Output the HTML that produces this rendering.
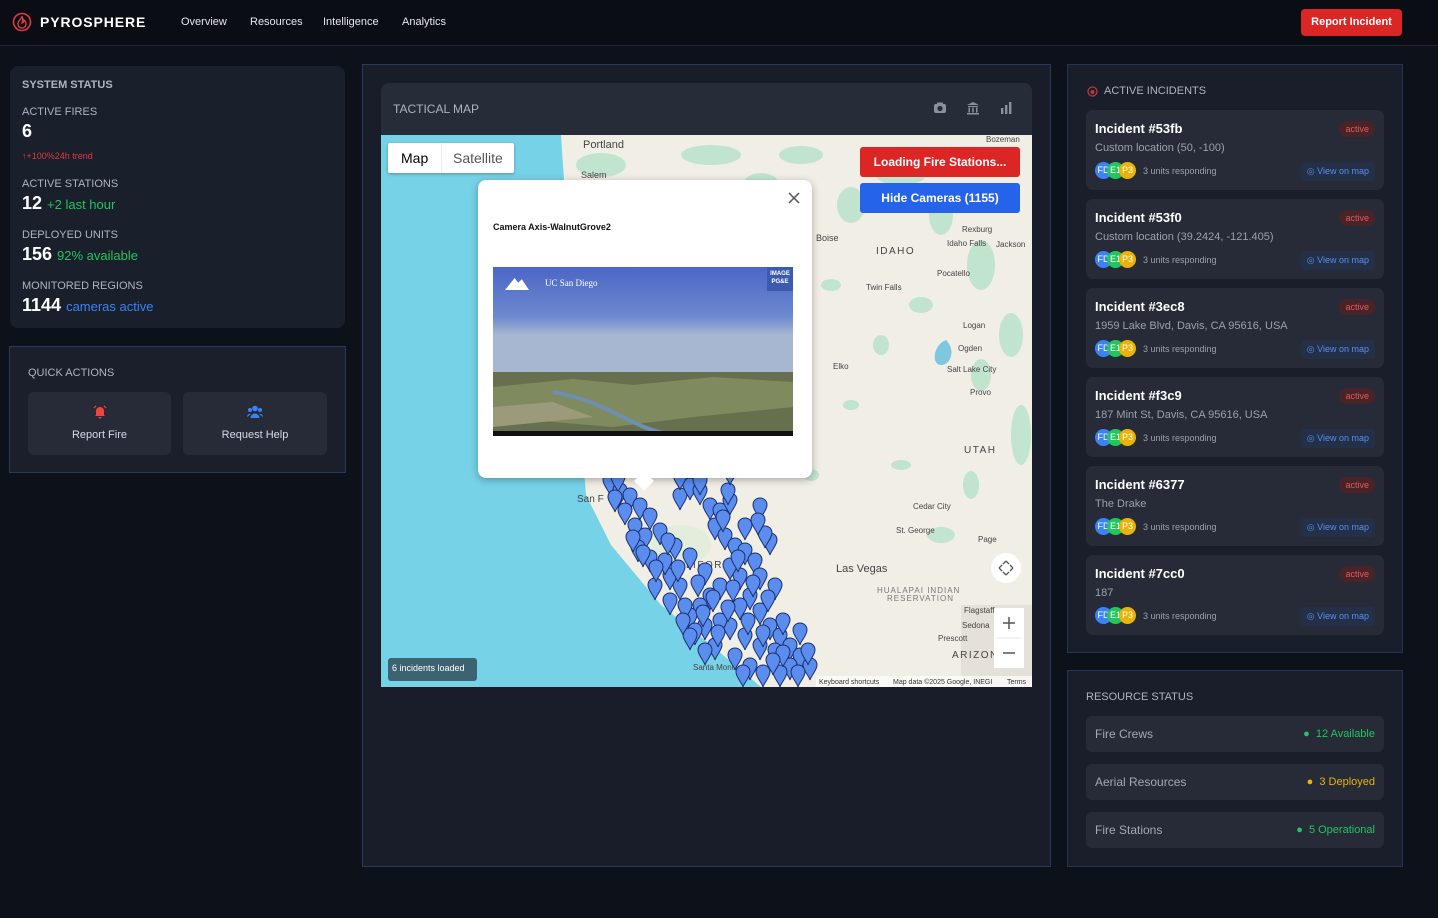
<!DOCTYPE html>
<html><head><meta charset="utf-8">
<style>
*{box-sizing:border-box;margin:0;padding:0}
body{width:1438px;height:918px;background:#0d1119;font-family:"Liberation Sans",sans-serif;position:relative;overflow:hidden;color:#e5e7eb}
.abs{position:absolute}
.hdr{left:0;top:0;width:1438px;height:46px;background:#0a0d14;border-bottom:1px solid #1f2735}
.nav{top:16px;font-size:11px;color:#e5e7eb}
.panel{background:#1a1f2c;border-radius:8px}
.lbl{font-size:11px;color:#aeb4c0;text-transform:uppercase}
.big{font-size:18px;font-weight:bold;color:#fff}
.card{left:1086px;width:298px;height:80px;background:#262b37;border-radius:7px}
.card .t{position:absolute;left:9px;top:11px;font-size:13px;font-weight:bold;color:#fff}
.card .a{position:absolute;right:9px;top:11px;background:#4a2328;color:#e05a5a;font-size:9px;padding:3px 6px;border-radius:9px}
.card .l{position:absolute;left:9px;top:32px;font-size:11px;color:#9aa1ad}
.card .u{position:absolute;left:9px;top:52px;height:17px;width:60px}
.card .u span{position:absolute;top:0;width:17px;height:17px;border-radius:50%;font-size:9px;color:#fff;text-align:center;line-height:17px}
.card .r{position:absolute;left:57px;top:56px;font-size:9px;color:#9aa1ad}
.card .v{position:absolute;right:9px;top:52px;background:#233047;color:#5b8def;font-size:9px;padding:4px 6px;border-radius:3px}
.res{left:1086px;width:298px;height:36px;background:#262b37;border-radius:6px}
.res .n{position:absolute;left:9px;top:11px;font-size:12px;color:#a3a9b5}
.res .s{position:absolute;right:9px;top:12px;font-size:11px}
</style></head><body>
<div class="abs hdr"></div>
<svg class="abs" style="left:12px;top:12px" width="20" height="20" viewBox="0 0 20 20"><circle cx="10" cy="10" r="8.5" fill="none" stroke="#e0393e" stroke-width="1.6"/><path d="M10 4c0 3-4 4-4 8a4 4 0 008 0c0-2-1-3-2-4 0 2-1 3-2 3 1-2 1-4 0-7z" fill="none" stroke="#e0393e" stroke-width="1.4"/></svg>
<div class="abs" style="left:40px;top:14px;font-size:14px;font-weight:bold;letter-spacing:0.9px;color:#fff">PYROSPHERE</div>
<div class="abs nav" style="left:181px">Overview</div>
<div class="abs nav" style="left:250px">Resources</div>
<div class="abs nav" style="left:323px">Intelligence</div>
<div class="abs nav" style="left:402px">Analytics</div>
<div class="abs" style="left:1301px;top:9px;width:101px;height:27px;background:#dc2626;border-radius:4px;color:#fff;font-size:11px;font-weight:bold;text-align:center;line-height:27px">Report Incident</div>

<div class="abs panel" style="left:10px;top:66px;width:335px;height:262px"></div>
<div class="abs lbl" style="left:22px;top:79px;font-weight:bold">System Status</div>
<div class="abs lbl" style="left:22px;top:106px">Active Fires</div>
<div class="abs big" style="left:22px;top:121px">6</div>
<div class="abs" style="left:22px;top:151px;font-size:9px;color:#e0393e">↑+100%24h trend</div>
<div class="abs lbl" style="left:22px;top:178px">Active Stations</div>
<div class="abs big" style="left:22px;top:193px">12 <span style="font-size:13px;font-weight:normal;color:#22c55e">+2 last hour</span></div>
<div class="abs lbl" style="left:22px;top:229px">Deployed Units</div>
<div class="abs big" style="left:22px;top:244px">156 <span style="font-size:13px;font-weight:normal;color:#22c55e">92% available</span></div>
<div class="abs lbl" style="left:22px;top:280px">Monitored Regions</div>
<div class="abs big" style="left:22px;top:295px">1144 <span style="font-size:13px;font-weight:normal;color:#3b82f6">cameras active</span></div>

<div class="abs" style="left:9px;top:346px;width:337px;height:127px;background:#1a1f2b;border:1px solid #2b3a5a"></div>
<div class="abs lbl" style="left:28px;top:367px">Quick Actions</div>
<div class="abs" style="left:28px;top:392px;width:143px;height:63px;background:#262b37;border-radius:6px"></div>
<div class="abs" style="left:183px;top:392px;width:144px;height:63px;background:#262b37;border-radius:6px"></div>
<svg class="abs" style="left:93px;top:405px" width="14" height="14" viewBox="0 0 14 14"><path d="M3 10V6a4 4 0 018 0v4l1 1H2z M5.5 12h3a1.5 1.5 0 01-3 0z" fill="#ef4444"/><path d="M1 3l2-2M13 3l-2-2" stroke="#ef4444" stroke-width="1.2"/></svg>
<div class="abs" style="left:28px;top:429px;width:143px;text-align:center;font-size:11px;color:#d8dbe0">Report Fire</div>
<svg class="abs" style="left:247px;top:405px" width="16" height="14" viewBox="0 0 16 14"><circle cx="8" cy="3.5" r="2.8" fill="#3b82f6"/><circle cx="3" cy="5" r="2" fill="#3b82f6"/><circle cx="13" cy="5" r="2" fill="#3b82f6"/><path d="M3.5 13a4.5 4.5 0 019 0z M0 12a3 3 0 014-3 M16 12a3 3 0 00-4-3" fill="#3b82f6"/></svg>
<div class="abs" style="left:183px;top:429px;width:144px;text-align:center;font-size:11px;color:#d8dbe0">Request Help</div>

<div class="abs" style="left:362px;top:64px;width:689px;height:803px;background:#181d29;border:1px solid #2a3a5a"></div>
<div class="abs" style="left:381px;top:83px;width:651px;height:60px;background:#262c38;border-radius:8px 8px 0 0"></div>
<div class="abs" style="left:393px;top:102px;font-size:12px;color:#aeb4c0">TACTICAL MAP</div>
<svg class="abs" style="left:933px;top:101px" width="82" height="14" viewBox="0 0 82 14"><rect x="1" y="3" width="12" height="9" rx="2" fill="#8b919c"/><rect x="4" y="1.5" width="6" height="3" fill="#8b919c"/><circle cx="7" cy="7.5" r="2.6" fill="#262c38"/><path d="M34 4l6-3 6 3z M35 5h10v1h-10z M35.5 6.5h1.5v5h-1.5z M39.2 6.5h1.5v5h-1.5z M43 6.5h1.5v5h-1.5z M34 12h12v1.5h-12z" fill="#8b919c"/><rect x="68" y="7" width="2.4" height="6" fill="#8b919c"/><rect x="72" y="4" width="2.4" height="9" fill="#8b919c"/><rect x="76" y="1" width="2.4" height="12" fill="#8b919c"/></svg>

<!-- map -->
<svg class="abs" style="left:381px;top:135px" width="651" height="552" viewBox="0 0 651 552">
<defs><path id="pn" d="M7 0C3 0 0 3 0 7C0 12 6 18 7 22C8 18 14 12 14 7C14 3 11 0 7 0Z" fill="#5b8def" stroke="#1c2f6e" stroke-width="1"/></defs>
<rect width="651" height="552" fill="#f1eee5"/>
<g fill="#b5e2c9" opacity="0.8">
<ellipse cx="220" cy="30" rx="25" ry="12"/><ellipse cx="270" cy="60" rx="20" ry="14"/><ellipse cx="330" cy="20" rx="30" ry="10"/><ellipse cx="380" cy="50" rx="18" ry="12"/><ellipse cx="420" cy="20" rx="22" ry="9"/><ellipse cx="470" cy="70" rx="14" ry="18"/><ellipse cx="520" cy="40" rx="25" ry="10"/><ellipse cx="560" cy="80" rx="12" ry="20"/><ellipse cx="600" cy="130" rx="14" ry="25"/><ellipse cx="620" cy="60" rx="16" ry="12"/><ellipse cx="630" cy="200" rx="12" ry="22"/><ellipse cx="600" cy="240" rx="10" ry="16"/><ellipse cx="640" cy="300" rx="10" ry="30"/><ellipse cx="540" cy="170" rx="12" ry="8"/><ellipse cx="500" cy="210" rx="8" ry="10"/><ellipse cx="450" cy="150" rx="10" ry="6"/><ellipse cx="300" cy="100" rx="14" ry="8"/><ellipse cx="250" cy="110" rx="10" ry="7"/><ellipse cx="560" cy="400" rx="14" ry="8"/><ellipse cx="430" cy="340" rx="8" ry="6"/><ellipse cx="360" cy="300" rx="10" ry="6"/><ellipse cx="470" cy="270" rx="8" ry="5"/><ellipse cx="320" cy="170" rx="8" ry="10"/><ellipse cx="590" cy="350" rx="8" ry="14"/><ellipse cx="520" cy="330" rx="10" ry="5"/><ellipse cx="300" cy="410" rx="30" ry="20" fill="#dfeed8"/></g>
<path d="M0 0H180L184 60L190 120L197 200L200 300L205 360L230 410L280 470L330 510L380 552H0Z" fill="#76d2e7"/>
<path d="M565 205c10 10 5 25 -5 25s-8-20 5-25z" fill="#7fc7df"/>
<rect x="580" y="470" width="71" height="82" fill="#ddd9d2" opacity="0.6"/>
<g font-family="Liberation Sans,sans-serif" fill="#444" font-size="9">
<text x="202" y="13" font-size="11">Portland</text><text x="200" y="43">Salem</text><text x="605" y="7" font-size="8">Bozeman</text>
<text x="435" y="106">Boise</text><text x="495" y="119" font-size="10" letter-spacing="1.5">IDAHO</text><text x="581" y="97" font-size="8">Rexburg</text><text x="566" y="111" font-size="8">Idaho Falls</text><text x="615" y="112" font-size="8">Jackson</text><text x="556" y="141" font-size="8">Pocatello</text><text x="485" y="155" font-size="8">Twin Falls</text><text x="582" y="193" font-size="8">Logan</text><text x="577" y="216" font-size="8">Ogden</text><text x="566" y="237" font-size="8">Salt Lake City</text><text x="589" y="260" font-size="8">Provo</text><text x="452" y="234" font-size="8">Elko</text><text x="583" y="318" font-size="10" letter-spacing="1.5">UTAH</text><text x="532" y="374" font-size="8">Cedar City</text><text x="515" y="398" font-size="8">St. George</text><text x="597" y="407" font-size="8">Page</text><text x="455" y="437" font-size="11">Las Vegas</text><text x="496" y="458" font-size="8" letter-spacing="1" fill="#777">HUALAPAI INDIAN</text><text x="506" y="466" font-size="8" letter-spacing="1" fill="#777">RESERVATION</text><text x="583" y="478" font-size="8">Flagstaff</text><text x="581" y="493" font-size="8">Sedona</text><text x="557" y="506" font-size="8">Prescott</text><text x="571" y="523" font-size="10" letter-spacing="1.5">ARIZON</text><text x="196" y="367" font-size="10">San F</text><text x="305" y="433" font-size="10" letter-spacing="1.5">LIFORN</text><text x="312" y="535" font-size="8">Santa Monica</text>
</g>
<g>
<use href="#pn" x="222" y="338"/><use href="#pn" x="232" y="348"/><use href="#pn" x="242" y="353"/><use href="#pn" x="252" y="363"/><use href="#pn" x="262" y="373"/><use href="#pn" x="237" y="368"/><use href="#pn" x="247" y="383"/><use href="#pn" x="257" y="393"/><use href="#pn" x="272" y="388"/><use href="#pn" x="292" y="353"/><use href="#pn" x="302" y="343"/><use href="#pn" x="312" y="348"/><use href="#pn" x="322" y="363"/><use href="#pn" x="332" y="368"/><use href="#pn" x="342" y="358"/><use href="#pn" x="327" y="383"/><use href="#pn" x="337" y="393"/><use href="#pn" x="347" y="403"/><use href="#pn" x="357" y="408"/><use href="#pn" x="367" y="418"/><use href="#pn" x="372" y="433"/><use href="#pn" x="352" y="433"/><use href="#pn" x="342" y="423"/><use href="#pn" x="332" y="443"/><use href="#pn" x="322" y="453"/><use href="#pn" x="312" y="463"/><use href="#pn" x="302" y="473"/><use href="#pn" x="292" y="443"/><use href="#pn" x="282" y="433"/><use href="#pn" x="277" y="418"/><use href="#pn" x="287" y="403"/><use href="#pn" x="302" y="413"/><use href="#pn" x="317" y="428"/><use href="#pn" x="362" y="453"/><use href="#pn" x="372" y="468"/><use href="#pn" x="382" y="483"/><use href="#pn" x="392" y="493"/><use href="#pn" x="402" y="503"/><use href="#pn" x="412" y="513"/><use href="#pn" x="422" y="523"/><use href="#pn" x="387" y="508"/><use href="#pn" x="372" y="503"/><use href="#pn" x="357" y="493"/><use href="#pn" x="342" y="483"/><use href="#pn" x="332" y="478"/><use href="#pn" x="317" y="483"/><use href="#pn" x="307" y="488"/><use href="#pn" x="352" y="463"/><use href="#pn" x="372" y="363"/><use href="#pn" x="382" y="398"/><use href="#pn" x="387" y="443"/><use href="#pn" x="357" y="383"/><use href="#pn" x="267" y="443"/><use href="#pn" x="297" y="463"/><use href="#pn" x="327" y="503"/><use href="#pn" x="347" y="513"/><use href="#pn" x="362" y="523"/><use href="#pn" x="402" y="523"/><use href="#pn" x="412" y="488"/><use href="#pn" x="312" y="338"/><use href="#pn" x="292" y="333"/><use href="#pn" x="340" y="348"/><use href="#pn" x="377" y="391"/><use href="#pn" x="302" y="493"/><use href="#pn" x="317" y="508"/><use href="#pn" x="342" y="328"/><use href="#pn" x="370" y="378"/><use href="#pn" x="280" y="398"/><use href="#pn" x="290" y="425"/><use href="#pn" x="310" y="440"/><use href="#pn" x="325" y="455"/><use href="#pn" x="345" y="445"/><use href="#pn" x="360" y="478"/><use href="#pn" x="380" y="455"/><use href="#pn" x="395" y="478"/><use href="#pn" x="355" y="530"/><use href="#pn" x="375" y="530"/><use href="#pn" x="392" y="530"/><use href="#pn" x="282" y="458"/><use href="#pn" x="295" y="478"/><use href="#pn" x="315" y="470"/><use href="#pn" x="250" y="405"/><use href="#pn" x="262" y="415"/><use href="#pn" x="230" y="335"/>
<use href="#pn" x="227" y="355"/><use href="#pn" x="245" y="395"/><use href="#pn" x="255" y="410"/><use href="#pn" x="268" y="425"/><use href="#pn" x="335" y="375"/><use href="#pn" x="350" y="415"/><use href="#pn" x="365" y="440"/><use href="#pn" x="340" y="465"/><use href="#pn" x="375" y="490"/><use href="#pn" x="395" y="510"/><use href="#pn" x="410" y="530"/><use href="#pn" x="420" y="508"/><use href="#pn" x="385" y="518"/><use href="#pn" x="330" y="490"/>
</g>
<rect x="610" y="418" width="30" height="30" rx="15" fill="#fff"/>
<path d="M625 426l-3 3M625 426l3 3M625 440l-3-3M625 440l3-3M618 433l3-3M618 433l3 3M632 433l-3-3M632 433l-3 3" stroke="#555" stroke-width="1.3"/>
<rect x="613" y="473" width="30" height="60" fill="#fff"/><line x1="616" y1="503" x2="640" y2="503" stroke="#e5e5e5"/>
<path d="M622 488h12M628 482v12M622 518h12" stroke="#555" stroke-width="1.5"/>
<rect x="435" y="541" width="216" height="11" fill="#fff" opacity="0.7"/>
<g font-family="Liberation Sans,sans-serif" font-size="7" fill="#333"><text x="438" y="549">Keyboard shortcuts</text><text x="512" y="549">Map data ©2025 Google, INEGI</text><text x="626" y="549">Terms</text></g>
</svg>
<div class="abs" style="left:388px;top:143px;width:126px;height:30px;background:#fff;border-radius:2px;box-shadow:0 1px 3px rgba(0,0,0,.3)"></div>
<div class="abs" style="left:401px;top:150px;font-size:14px;color:#000">Map</div>
<div class="abs" style="left:441px;top:143px;width:1px;height:30px;background:#eee"></div>
<div class="abs" style="left:453px;top:150px;font-size:14px;color:#555">Satellite</div>
<div class="abs" style="left:860px;top:147px;width:160px;height:30px;background:#dc2626;border-radius:3px;color:#fff;font-size:12px;font-weight:bold;text-align:center;line-height:30px">Loading Fire Stations...</div>
<div class="abs" style="left:860px;top:183px;width:160px;height:30px;background:#2563eb;border-radius:3px;color:#fff;font-size:12px;font-weight:bold;text-align:center;line-height:30px">Hide Cameras (1155)</div>
<div class="abs" style="left:388px;top:658px;width:89px;height:23px;background:#3d6370;border-radius:3px;color:#fff;font-size:9px;padding:5px 4px">6 incidents loaded</div>

<div class="abs" style="left:478px;top:180px;width:334px;height:298px;background:#fff;border-radius:8px;box-shadow:0 2px 8px rgba(0,0,0,.3)"></div>
<div class="abs" style="left:637px;top:474px;width:14px;height:14px;background:#fff;transform:rotate(45deg)"></div>
<svg class="abs" style="left:788px;top:192px" width="12" height="12"><path d="M1 1l10 10M11 1L1 11" stroke="#555" stroke-width="1.5"/></svg>
<div class="abs" style="left:493px;top:222px;font-size:9px;font-weight:bold;color:#111">Camera Axis-WalnutGrove2</div>
<svg class="abs" style="left:493px;top:267px" width="300" height="169" viewBox="0 0 300 169">
<defs><linearGradient id="sk" x1="0" y1="0" x2="0" y2="1"><stop offset="0" stop-color="#4b66c6"/><stop offset="0.45" stop-color="#6d89cf"/><stop offset="0.62" stop-color="#a7b7d2"/></linearGradient></defs>
<rect width="300" height="110" fill="url(#sk)"/>
<rect y="105" width="300" height="59" fill="#66704f"/>
<path d="M0 120L80 112L140 118L220 110L300 115V140L200 150L120 160L0 150Z" fill="#7f8a5e"/>
<path d="M60 125c30 5 50 15 80 30s40 10 50 14" stroke="#6f8fb0" stroke-width="4" fill="none"/>
<path d="M0 140L60 135L100 150L0 160Z" fill="#9b9a7a"/>
<rect y="164" width="300" height="5" fill="#111"/>
</svg>
<div class="abs" style="left:545px;top:278px;font-size:9px;color:#fff;font-family:'Liberation Serif',serif">UC San Diego</div>
<div class="abs" style="left:505px;top:278px;width:24px;height:12px;background:#fff;clip-path:polygon(0 100%,40% 0,55% 40%,70% 10%,100% 100%)"></div>
<div class="abs" style="left:767px;top:267px;width:26px;height:24px;background:#3a5bb0;color:#fff;font-size:6px;font-weight:bold;text-align:center;padding-top:3px;line-height:8px">IMAGE<br>PG&amp;E</div>

<!-- right -->
<div class="abs" style="left:1067px;top:64px;width:336px;height:589px;background:#1a1e2a;border:1px solid #243452"></div>
<svg class="abs" style="left:1087px;top:86px" width="11" height="11"><circle cx="5.5" cy="5.5" r="4.5" fill="none" stroke="#b93a3a" stroke-width="1.3"/><circle cx="5.5" cy="6" r="2" fill="#b93a3a"/></svg>
<div class="abs lbl" style="left:1104px;top:85px">Active Incidents</div>

<div class="abs card" style="top:110px"><div class="t">Incident #53fb</div><div class="a">active</div><div class="l">Custom location (50, -100)</div><div class="u"><span style="left:0;background:#3b82f6">FD</span><span style="left:12px;background:#22c55e">E1</span><span style="left:24px;background:#eab308">P3</span></div><div class="r">3 units responding</div><div class="v">◎ View on map</div></div>
<div class="abs card" style="top:199px"><div class="t">Incident #53f0</div><div class="a">active</div><div class="l">Custom location (39.2424, -121.405)</div><div class="u"><span style="left:0;background:#3b82f6">FD</span><span style="left:12px;background:#22c55e">E1</span><span style="left:24px;background:#eab308">P3</span></div><div class="r">3 units responding</div><div class="v">◎ View on map</div></div>
<div class="abs card" style="top:288px"><div class="t">Incident #3ec8</div><div class="a">active</div><div class="l">1959 Lake Blvd, Davis, CA 95616, USA</div><div class="u"><span style="left:0;background:#3b82f6">FD</span><span style="left:12px;background:#22c55e">E1</span><span style="left:24px;background:#eab308">P3</span></div><div class="r">3 units responding</div><div class="v">◎ View on map</div></div>
<div class="abs card" style="top:377px"><div class="t">Incident #f3c9</div><div class="a">active</div><div class="l">187 Mint St, Davis, CA 95616, USA</div><div class="u"><span style="left:0;background:#3b82f6">FD</span><span style="left:12px;background:#22c55e">E1</span><span style="left:24px;background:#eab308">P3</span></div><div class="r">3 units responding</div><div class="v">◎ View on map</div></div>
<div class="abs card" style="top:466px"><div class="t">Incident #6377</div><div class="a">active</div><div class="l">The Drake</div><div class="u"><span style="left:0;background:#3b82f6">FD</span><span style="left:12px;background:#22c55e">E1</span><span style="left:24px;background:#eab308">P3</span></div><div class="r">3 units responding</div><div class="v">◎ View on map</div></div>
<div class="abs card" style="top:555px"><div class="t">Incident #7cc0</div><div class="a">active</div><div class="l">187</div><div class="u"><span style="left:0;background:#3b82f6">FD</span><span style="left:12px;background:#22c55e">E1</span><span style="left:24px;background:#eab308">P3</span></div><div class="r">3 units responding</div><div class="v">◎ View on map</div></div>

<div class="abs" style="left:1067px;top:670px;width:336px;height:197px;background:#1a1e2a;border:1px solid #243452"></div>
<div class="abs lbl" style="left:1086px;top:691px">Resource Status</div>
<div class="abs res" style="top:716px"><div class="n">Fire Crews</div><div class="s" style="color:#22c55e">● &nbsp;12 Available</div></div>
<div class="abs res" style="top:764px"><div class="n">Aerial Resources</div><div class="s" style="color:#eab308">● &nbsp;3 Deployed</div></div>
<div class="abs res" style="top:812px"><div class="n">Fire Stations</div><div class="s" style="color:#22c55e">● &nbsp;5 Operational</div></div>
</body></html>
